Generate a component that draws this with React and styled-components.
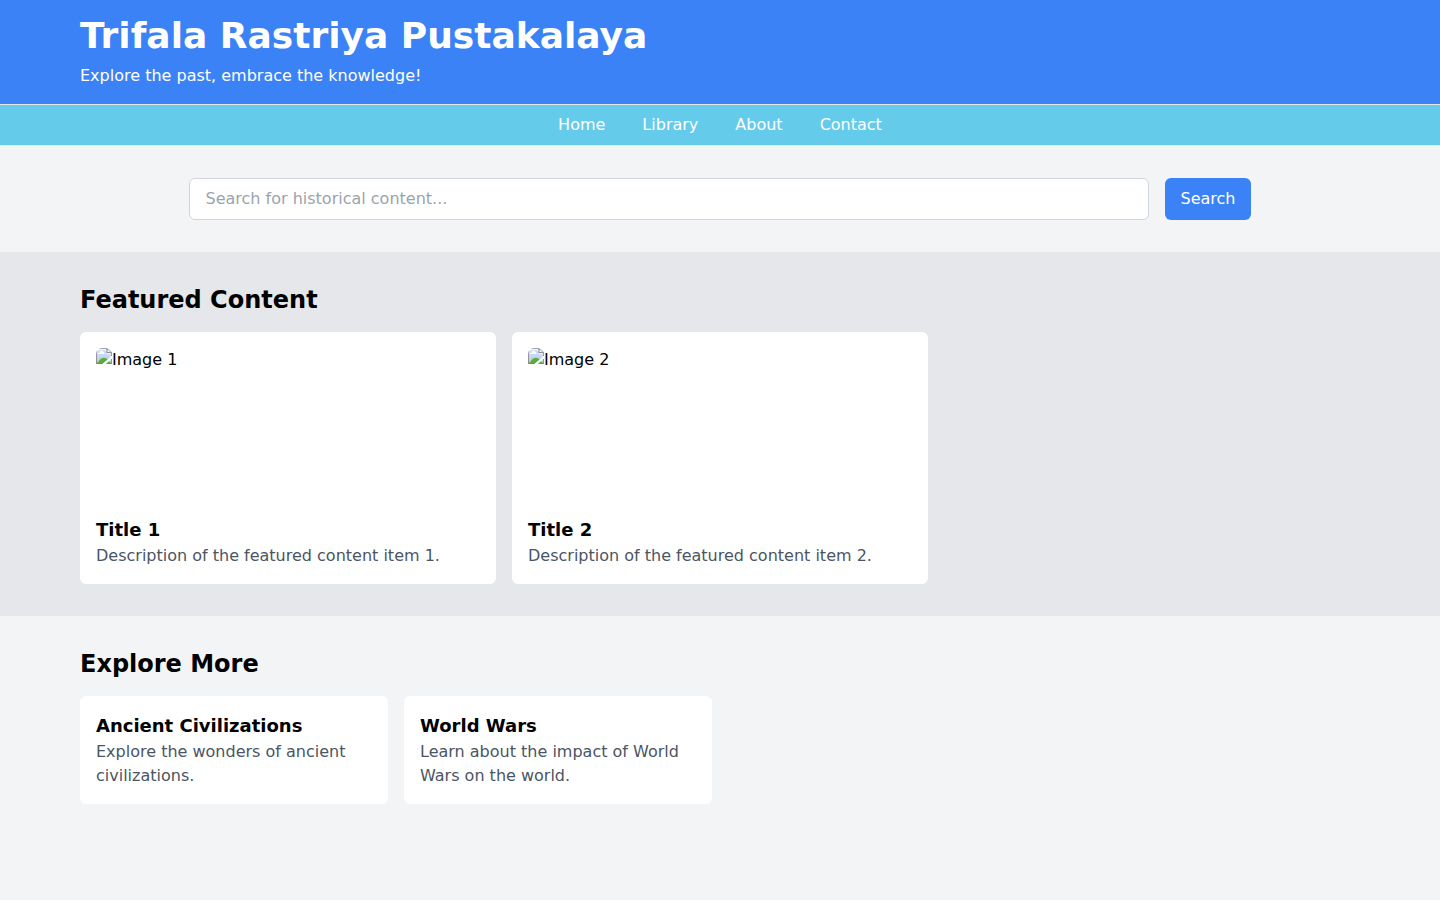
import React from "react";
import styled, { createGlobalStyle } from "styled-components";

const GlobalStyle = createGlobalStyle`
  *, *::before, *::after { box-sizing: border-box; }
  body {
    margin: 0;
    background: #f3f4f6;
    color: #000;
    font-family: "DejaVu Sans", sans-serif;
    font-size: 16px;
    line-height: 24px;
  }
  h1, h2, h3, p { margin: 0; }
`;

const Page = styled.div`
  min-height: 100vh;
`;

const Container = styled.div`
  width: 1280px;
  margin: 0 auto;
`;

const Header = styled.header`
  padding: 16px 0;
  background: #3b82f6;
  color: #fff;
`;

const SiteTitle = styled.h1`
  font-size: 36px;
  line-height: 40px;
  font-weight: 700;
`;

const Tagline = styled.p`
  margin-top: 8px;
`;

const Nav = styled.nav`
  display: flex;
  justify-content: center;
  gap: 37px;
  padding: 8px 0;
  border-top: 1px solid #e5e7eb;
  border-bottom: 1px solid #e5e7eb;
  background: #65cbeb;
`;

const NavLink = styled.a`
  color: #fff;
  text-decoration: none;
`;

const SearchSection = styled.section`
  display: flex;
  justify-content: center;
  gap: 16px;
  padding: 32px 0;
`;

const SearchInput = styled.input`
  width: 960px;
  height: 42px;
  padding: 7px 16px 9px;
  border: 1px solid #d1d5db;
  border-radius: 6px;
  background: #fff;
  font: inherit;
  &::placeholder { color: #9ca3af; opacity: 1; }
`;

const SearchButton = styled.button`
  padding: 8px 16px;
  border: 0;
  border-radius: 6px;
  background: #3b82f6;
  color: #fff;
  font: inherit;
`;

const Section = styled.section`
  padding: 32px 0;
  background: ${(p) => (p.$shaded ? "#e5e7eb" : "transparent")};
`;

const SectionTitle = styled.h2`
  margin-bottom: 16px;
  font-size: 24px;
  line-height: 32px;
  font-weight: 700;
`;

const CardGrid = styled.div`
  display: grid;
  grid-template-columns: repeat(${(p) => p.$columns}, minmax(0, 1fr));
  gap: 16px;
`;

const Card = styled.article`
  padding: 16px;
  border-radius: 6px;
  background: #fff;
`;

const CardImage = styled.img`
  display: block;
  width: 100%;
  height: 160px;
  margin-bottom: 8px;
  border-radius: 6px;
  object-fit: cover;
`;

const CardTitle = styled.h3`
  font-size: 18px;
  line-height: 28px;
  font-weight: 700;
`;

const CardText = styled.p`
  color: #4b5563;
`;

const links = ["Home", "Library", "About", "Contact"];

const featured = [
  { image: "Image 1", title: "Title 1", text: "Description of the featured content item 1." },
  { image: "Image 2", title: "Title 2", text: "Description of the featured content item 2." },
];

const topics = [
  { title: "Ancient Civilizations", text: "Explore the wonders of ancient civilizations." },
  { title: "World Wars", text: "Learn about the impact of World Wars on the world." },
];

export default function App() {
  return (
    <Page>
      <GlobalStyle />
      <Header>
        <Container>
          <SiteTitle>Trifala Rastriya Pustakalaya</SiteTitle>
          <Tagline>Explore the past, embrace the knowledge!</Tagline>
        </Container>
      </Header>
      <Nav>
        {links.map((link) => (
          <NavLink key={link} href="#">{link}</NavLink>
        ))}
      </Nav>
      <SearchSection>
        <SearchInput type="text" placeholder="Search for historical content..." />
        <SearchButton>Search</SearchButton>
      </SearchSection>
      <Section $shaded>
        <Container>
          <SectionTitle>Featured Content</SectionTitle>
          <CardGrid $columns={3}>
            {featured.map((item) => (
              <Card key={item.title}>
                <CardImage src="data:," alt={item.image} />
                <CardTitle>{item.title}</CardTitle>
                <CardText>{item.text}</CardText>
              </Card>
            ))}
          </CardGrid>
        </Container>
      </Section>
      <Section>
        <Container>
          <SectionTitle>Explore More</SectionTitle>
          <CardGrid $columns={4}>
            {topics.map((item) => (
              <Card key={item.title}>
                <CardTitle>{item.title}</CardTitle>
                <CardText>{item.text}</CardText>
              </Card>
            ))}
          </CardGrid>
        </Container>
      </Section>
    </Page>
  );
}
